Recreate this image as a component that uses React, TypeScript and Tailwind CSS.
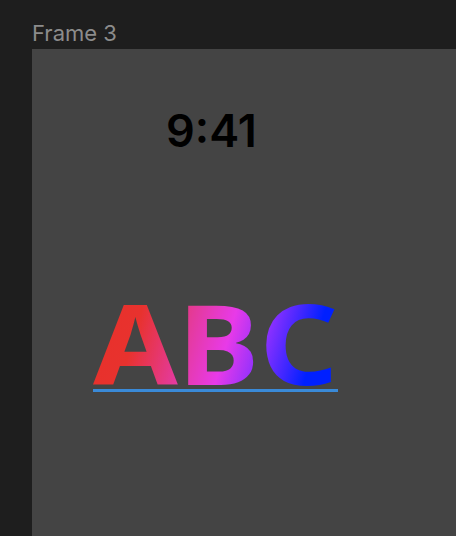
import React from "react";

export default function App() {
  return (
    <div className="w-[456px] h-[536px] bg-[#1e1e1e] flex flex-col overflow-hidden" style={{ fontFamily: "Inter, 'Noto Sans', sans-serif" }}>
      <div className="pl-[32px] pt-[20px] h-[49px] text-[22px] leading-[26px] text-[#8c8c8c]">Frame 3</div>
      <div className="ml-[32px] flex-1 bg-[#444444] flex flex-col">
        <div className="pl-[134px] pt-[56px] text-[45px] leading-[52px] font-semibold text-black">9:41</div>
        <div className="pl-[61px] pt-[138px]">
          <div className="inline-flex flex-col">
            <span
              className="text-[112px] leading-[94px] font-bold whitespace-nowrap bg-clip-text text-transparent origin-left scale-x-[1.095]"
              style={{ fontFamily: "'Noto Sans', sans-serif", backgroundImage: "linear-gradient(105deg, #e8302a 0%, #e8322e 18%, #e43a9c 36%, #e83ae8 50%, #8a30ff 63%, #4a28ff 71%, #0020ff 80%)" }}
            >
              ABC
            </span>
            <div className="h-[3px] w-[245px] bg-[#3a8ad8]" />
          </div>
        </div>
      </div>
    </div>
  );
}
